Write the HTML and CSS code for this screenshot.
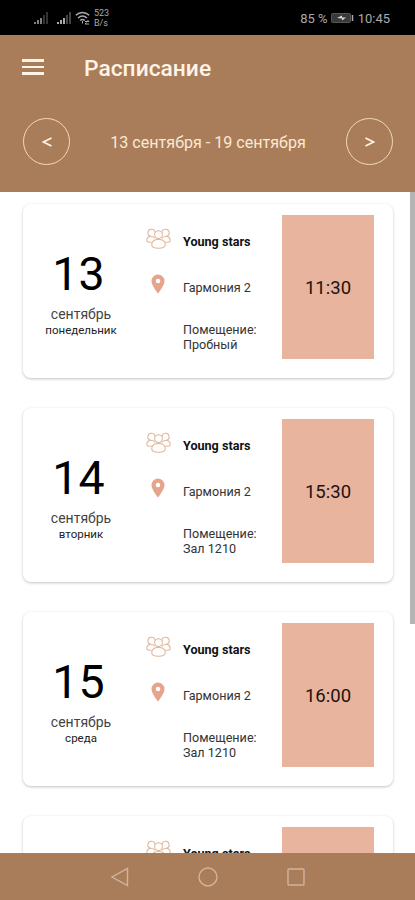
FILE: index.html
```html
<!DOCTYPE html>
<html lang="ru">
<head>
<meta charset="utf-8">
<title>Расписание</title>
<link rel="stylesheet" href="styles.css">
</head>
<body>
<svg class="defs" width="0" height="0">
  <symbol id="group" viewBox="0 0 24 20">
    <g fill="none" stroke="currentColor" stroke-width="1">
      <circle cx="12" cy="6.2" r="3.7"/>
      <path d="M8.6 4.6A3.4 3.4 0 1 0 4.5 7.8M15.4 4.6A3.4 3.4 0 1 1 19.5 7.8"/>
      <path d="M4.500 7.800C2 8.200.7 9.800.7 12c0 1.300 1.500 1.700 4.800 1.600M19.500 7.800C22 8.200 23.300 9.800 23.300 12c0 1.300-1.500 1.700-4.800 1.600"/>
      <path d="M4.500 7.800c2.200.1 3.500.9 4.200 2.200M19.500 7.800c-2.200.1-3.500.9-4.200 2.200"/>
      <path d="M12 11c-4 0-6.500 1.900-6.500 5 0 2.200 2 3.300 6.500 3.300s6.500-1.100 6.500-3.300c0-3.100-2.500-5-6.500-5z"/>
    </g>
  </symbol>
  <symbol id="pin" viewBox="0 0 14 20">
    <path fill="currentColor" fill-rule="evenodd" d="M7 .5A6.500 6.500 0 0 0 .5 7c0 4.800 6.500 12.500 6.500 12.500S13.500 11.800 13.500 7A6.500 6.500 0 0 0 7 .5zm0 4.200a2.300 2.300 0 1 1 0 4.600 2.300 2.300 0 0 1 0-4.600z"/>
  </symbol>
  <symbol id="signal" viewBox="0 0 14 12">
    <path fill="currentColor" d="M0 10h2v2H0zM3 8h2v4H3zM6 6h2v6H6z"/>
    <path class="dim" fill="currentColor" d="M9 3h2v9H9zM12 0h2v12h-2z"/>
  </symbol>
</svg>
<div class="screen">
  <div class="status">
    <svg class="signal weak"><use href="#signal"/></svg>
    <svg class="signal"><use href="#signal"/></svg>
    <svg class="wifi" viewBox="0 0 15 14" fill="none" stroke="currentColor" stroke-width="1.500">
      <path d="M.8 4.200c4-3.700 9.400-3.700 13.400 0M3 7c2.700-2.400 6.300-2.400 9 0M5.200 9.500c1.400-1.200 3.200-1.200 4.600 0"/>
      <path d="M7.500 10v2.500M10 10.500h4M12.500 9l1.500 1.500M14 13h-4M11.500 11.500L10 13" stroke-width="1"/>
    </svg>
    <div class="speed"><span>523</span><span>B/s</span></div>
    <span class="percent">85 %</span>
    <svg class="battery" viewBox="0 0 23 10">
      <rect x=".5" y=".5" width="19" height="9" rx="1" fill="#393939" stroke="#555"/>
      <path d="M21.500 2v6" stroke="#aaa" stroke-width="1.500"/>
      <path d="M6 5l5-2.500V4.500h4L11 7.500V5.500z" fill="#ddd"/>
    </svg>
    <span class="clock">10:45</span>
  </div>
  <header class="header">
    <div class="bar">
      <div class="menu"><i></i><i></i><i></i></div>
      <h1>Расписание</h1>
    </div>
    <div class="week">
      <button><svg viewBox="0 0 10 10"><path d="M9.500 1L1.500 5l8 4"/></svg></button>
      <span>13 сентября - 19 сентября</span>
      <button><svg viewBox="0 0 10 10"><path d="M.5 1l8 4-8 4"/></svg></button>
    </div>
  </header>
  <main class="list">
    <article class="card">
      <div class="date"><b>13</b><span class="month">сентябрь</span><span class="weekday">понедельник</span></div>
      <div class="info">
        <svg class="group"><use href="#group"/></svg><strong>Young stars</strong>
        <svg class="pin"><use href="#pin"/></svg><span>Гармония 2</span>
        <p>Помещение:<br>Пробный</p>
      </div>
      <div class="time">11:30</div>
    </article>
    <article class="card">
      <div class="date"><b>14</b><span class="month">сентябрь</span><span class="weekday">вторник</span></div>
      <div class="info">
        <svg class="group"><use href="#group"/></svg><strong>Young stars</strong>
        <svg class="pin"><use href="#pin"/></svg><span>Гармония 2</span>
        <p>Помещение:<br>Зал 1210</p>
      </div>
      <div class="time">15:30</div>
    </article>
    <article class="card">
      <div class="date"><b>15</b><span class="month">сентябрь</span><span class="weekday">среда</span></div>
      <div class="info">
        <svg class="group"><use href="#group"/></svg><strong>Young stars</strong>
        <svg class="pin"><use href="#pin"/></svg><span>Гармония 2</span>
        <p>Помещение:<br>Зал 1210</p>
      </div>
      <div class="time">16:00</div>
    </article>
    <article class="card">
      <div class="date"></div>
      <div class="info">
        <svg class="group"><use href="#group"/></svg><strong>Young stars</strong>
      </div>
      <div class="time"></div>
    </article>
    <div class="scrollbar"></div>
  </main>
  <nav class="nav">
    <svg viewBox="0 0 20 20"><path d="M17.500 1.500v17L2 10z"/></svg>
    <svg viewBox="0 0 20 20"><circle cx="10" cy="10" r="9"/></svg>
    <svg viewBox="0 0 20 20"><rect x="2" y="2" width="16" height="16" rx="1"/></svg>
  </nav>
</div>
</body>
</html>
```
FILE: styles.css
```css
* { box-sizing: border-box; }
body { margin: 0; font-family: Roboto, "Noto Sans", sans-serif; background: #fff; }
.defs { display: block; position: absolute; }
.screen { width: 415px; height: 900px; display: flex; flex-direction: column; overflow: hidden; }

.status { flex: none; height: 35px; background: #000; color: #aaa; display: flex; align-items: center; padding: 1px 25px 0 34px; white-space: nowrap; }
.signal { width: 14px; height: 12px; margin-right: 9px; }
.signal + .signal { margin-right: 4px; }
.weak { opacity: .75; }
.dim { opacity: .4; }
.wifi { width: 15px; height: 14px; margin-right: 4px; }
.speed { display: flex; flex-direction: column; font-size: 9px; line-height: 10px; }
.percent { margin-left: auto; font-size: 13px; }
.battery { width: 23px; height: 10px; margin: 0 4px 0 3px; }
.clock { font-size: 13px; }

.header { flex: none; height: 156.500px; background: #aa7d5a; color: #fff4e6; }
.bar { height: 66px; display: flex; align-items: center; padding-left: 22px; }
.menu { width: 22px; display: flex; flex-direction: column; gap: 4px; margin: -2px 40px 0 0; }
.menu i { height: 2.500px; background: #fff4e6; }
h1 { margin: 2px 0 0; font-size: 22.800px; font-weight: 500; line-height: 28px; }
.week { display: flex; align-items: center; justify-content: space-between; padding: 17px 22px 0 23px; font-size: 16.100px; white-space: nowrap; color: #fbe9d4; }
.week span { padding-top: 1px; }
.week button { width: 47px; height: 47px; padding: 0; border: 1.500px solid #f3d9b8; border-radius: 50%; background: none; display: grid; place-items: center; }
.week button svg { width: 10px; height: 10px; fill: none; stroke: #fff4e6; stroke-width: 1.700; }

.list { flex: 1; min-height: 0; overflow: hidden; position: relative; padding: 12px 22px 0 23px; display: flex; flex-direction: column; gap: 30px; }
.card { flex: none; height: 174px; border-radius: 8px; background: #fff; box-shadow: 0 1px 3px rgba(0,0,0,.24); display: grid; grid-template-columns: 116px 143px 92px; padding-top: 11px; }
.date { display: flex; flex-direction: column; align-items: center; padding-top: 32px; }
.date b { font-size: 46.500px; font-weight: 400; line-height: 54px; color: #000; margin-right: 5px; }
.month { font-size: 14px; line-height: 18px; margin-top: 4px; color: #444; }
.weekday { font-size: 11.500px; line-height: 15px; color: #222; }
.info { display: grid; grid-template-columns: 39px 1fr; grid-template-rows: 47px 46px 51px; align-items: center; align-content: start; padding-left: 5px; font-size: 12.600px; color: #333; padding-top: 3px; white-space: nowrap; }
.info svg { justify-self: center; margin-right: 11px; }
.group { width: 25px; height: 21px; color: #deb69b; margin-top: -5px; }
.pin { width: 14px; height: 20px; color: #e5a58c; margin-top: -8px; }
strong { font-weight: 700; color: #111; }
p { grid-column: 2; margin: 0; line-height: 15px; padding-top: 1px; }
.time { height: 144px; background: #e8b49d; display: grid; place-items: center; padding-top: 2px; font-size: 18.500px; color: #211; }
.scrollbar { position: absolute; right: 0; top: 0; width: 5px; height: 432px; background: #b4b4b4; }

.nav { flex: none; height: 47px; background: #aa7d5a; display: flex; align-items: center; justify-content: center; gap: 68px; }
.nav svg { width: 20px; height: 20px; fill: none; stroke: #d0b49e; stroke-width: 1.400; }
```
